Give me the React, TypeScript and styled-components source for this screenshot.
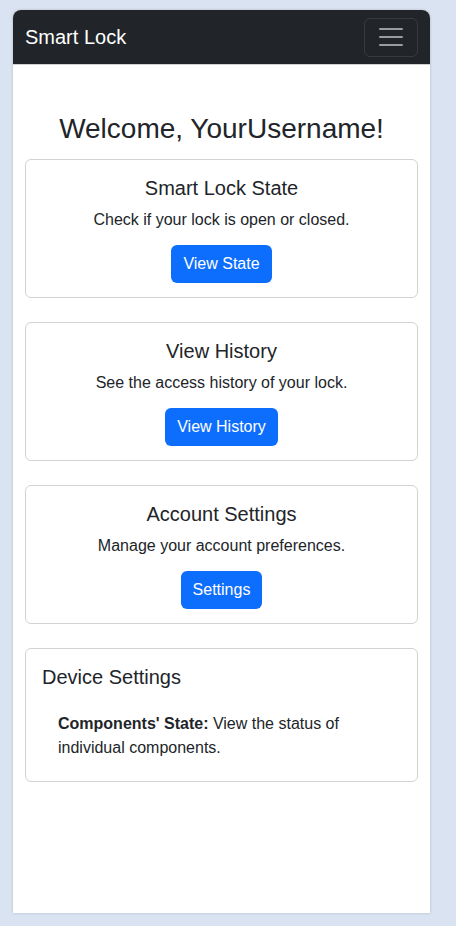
import React from 'react';
import styled, { createGlobalStyle } from 'styled-components';

const GlobalStyle = createGlobalStyle`
  * { box-sizing: border-box; }
  html, body {
    margin: 0;
    padding: 0;
    background: #dae3f1;
    font-family: "Liberation Sans", Arial, sans-serif;
    color: #212529;
  }
`;

const Page = styled.div`
  padding: 10px 26px 13px 13px;
  height: 926px;
`;

const Panel = styled.div`
  height: 903px;
  background: #fff;
  border-radius: 8px 8px 0 0;
  box-shadow: 0 0 3px rgba(0, 0, 0, 0.18);
  overflow: hidden;
  display: flex;
  flex-direction: column;
`;

const Navbar = styled.nav`
  height: 55px;
  flex-shrink: 0;
  background: #212529;
  display: flex;
  align-items: center;
  justify-content: space-between;
  padding: 0 12px;
  border-bottom: 1px solid #d0d0d0;
`;

const Brand = styled.span`
  color: #fff;
  font-size: 20px;
  line-height: 1;
`;

const Toggler = styled.button`
  width: 54px;
  height: 39px;
  background: transparent;
  border: 1px solid rgba(255, 255, 255, 0.1);
  border-radius: 6px;
  display: flex;
  align-items: center;
  justify-content: center;
  padding: 0;
`;

const Container = styled.main`
  padding: 47px 12px 0;
`;

const Heading = styled.h1`
  margin: 0 0 13px;
  font-size: 28px;
  font-weight: 500;
  line-height: 1.2;
  text-align: center;
`;

const Card = styled.section<{ $center?: boolean }>`
  border: 1px solid rgba(0, 0, 0, 0.175);
  border-radius: 6px;
  padding: 16px 16px ${(p) => (p.$center ? 14 : 16)}px;
  margin-bottom: 24px;
  text-align: ${(p) => (p.$center ? 'center' : 'left')};
`;

const CardTitle = styled.h5`
  margin: 0 0 8px;
  font-size: 20px;
  font-weight: 500;
  line-height: 1.2;
`;

const CardText = styled.p`
  margin: 0 0 13px;
  font-size: 16px;
  line-height: 1.5;
`;

const Button = styled.button`
  display: inline-block;
  vertical-align: top;
  height: 38px;
  padding: 0 12px;
  border: none;
  border-radius: 6px;
  background: #0d6efd;
  color: #fff;
  font-family: inherit;
  font-size: 16px;
  cursor: pointer;
`;

const List = styled.ul`
  list-style: none;
  margin: 23px 0 0;
  padding: 0 16px 5px;
`;

const ListItem = styled.li`
  font-size: 16px;
  line-height: 1.5;
`;

const Hamburger = () => (
  <svg width="30" height="30" viewBox="0 0 30 30">
    <path
      d="M4 7h22M4 15h22M4 23h22"
      stroke="rgba(255,255,255,0.55)"
      strokeWidth="2"
      strokeLinecap="round"
    />
  </svg>
);

const cards = [
  { title: 'Smart Lock State', text: 'Check if your lock is open or closed.', action: 'View State' },
  { title: 'View History', text: 'See the access history of your lock.', action: 'View History' },
  { title: 'Account Settings', text: 'Manage your account preferences.', action: 'Settings' },
];

export default function App() {
  return (
    <>
      <GlobalStyle />
      <Page>
        <Panel>
          <Navbar>
            <Brand>Smart Lock</Brand>
            <Toggler aria-label="Toggle navigation">
              <Hamburger />
            </Toggler>
          </Navbar>
          <Container>
            <Heading>Welcome, YourUsername!</Heading>
            {cards.map((c) => (
              <Card $center key={c.title}>
                <CardTitle>{c.title}</CardTitle>
                <CardText>{c.text}</CardText>
                <Button>{c.action}</Button>
              </Card>
            ))}
            <Card>
              <CardTitle>Device Settings</CardTitle>
              <List>
                <ListItem>
                  <strong>Components' State:</strong> View the status of individual components.
                </ListItem>
              </List>
            </Card>
          </Container>
        </Panel>
      </Page>
    </>
  );
}
